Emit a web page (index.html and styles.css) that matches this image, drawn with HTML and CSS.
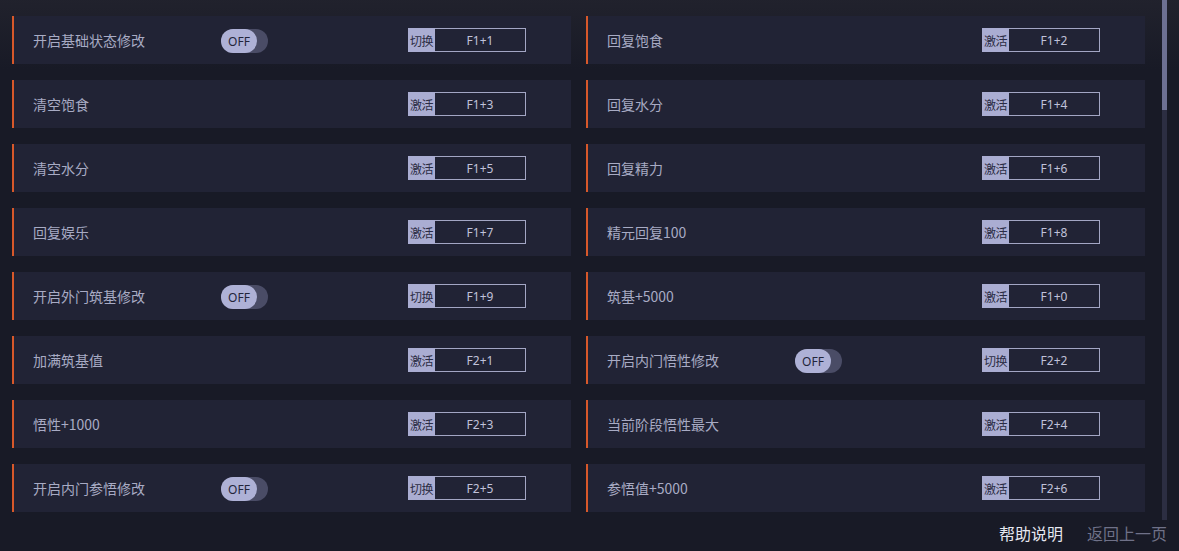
FILE: index.html
```html
<!DOCTYPE html>
<html lang="zh">
<head>
<meta charset="utf-8">
<link rel="stylesheet" href="styles.css">
</head>
<body>
<div class="page">
  <div class="grid">
    <div class="card"><span class="label">开启基础状态修改</span><span class="toggle"><span class="knob">OFF</span></span><span class="hk"><span class="tag">切换</span><span class="key">F1+1</span></span></div>
    <div class="card"><span class="label">回复饱食</span><span class="hk"><span class="tag">激活</span><span class="key">F1+2</span></span></div>
    <div class="card"><span class="label">清空饱食</span><span class="hk"><span class="tag">激活</span><span class="key">F1+3</span></span></div>
    <div class="card"><span class="label">回复水分</span><span class="hk"><span class="tag">激活</span><span class="key">F1+4</span></span></div>
    <div class="card"><span class="label">清空水分</span><span class="hk"><span class="tag">激活</span><span class="key">F1+5</span></span></div>
    <div class="card"><span class="label">回复精力</span><span class="hk"><span class="tag">激活</span><span class="key">F1+6</span></span></div>
    <div class="card"><span class="label">回复娱乐</span><span class="hk"><span class="tag">激活</span><span class="key">F1+7</span></span></div>
    <div class="card"><span class="label">精元回复100</span><span class="hk"><span class="tag">激活</span><span class="key">F1+8</span></span></div>
    <div class="card"><span class="label">开启外门筑基修改</span><span class="toggle"><span class="knob">OFF</span></span><span class="hk"><span class="tag">切换</span><span class="key">F1+9</span></span></div>
    <div class="card"><span class="label">筑基+5000</span><span class="hk"><span class="tag">激活</span><span class="key">F1+0</span></span></div>
    <div class="card"><span class="label">加满筑基值</span><span class="hk"><span class="tag">激活</span><span class="key">F2+1</span></span></div>
    <div class="card"><span class="label">开启内门悟性修改</span><span class="toggle"><span class="knob">OFF</span></span><span class="hk"><span class="tag">切换</span><span class="key">F2+2</span></span></div>
    <div class="card"><span class="label">悟性+1000</span><span class="hk"><span class="tag">激活</span><span class="key">F2+3</span></span></div>
    <div class="card"><span class="label">当前阶段悟性最大</span><span class="hk"><span class="tag">激活</span><span class="key">F2+4</span></span></div>
    <div class="card"><span class="label">开启内门参悟修改</span><span class="toggle"><span class="knob">OFF</span></span><span class="hk"><span class="tag">切换</span><span class="key">F2+5</span></span></div>
    <div class="card"><span class="label">参悟值+5000</span><span class="hk"><span class="tag">激活</span><span class="key">F2+6</span></span></div>
  </div>
  <div class="footer">
    <span class="help">帮助说明</span>
    <span class="back">返回上一页</span>
  </div>
  <div class="scrollbar"><div class="thumb"></div></div>
</div>
</body>
</html>
```
FILE: styles.css
```css
* { box-sizing: border-box; }
html, body {
  margin: 0;
  padding: 0;
  width: 1179px;
  height: 551px;
  overflow: hidden;
  background: #181a26;
  font-family: "Noto Sans CJK SC", "Noto Sans", sans-serif;
}
.page {
  position: relative;
  width: 1179px;
  height: 551px;
  background:
    linear-gradient(to bottom, rgba(40,40,50,0.55) 0px, rgba(24,26,38,0) 70px),
    #181a26;
}
.grid {
  display: grid;
  grid-template-columns: 559px 559px;
  grid-auto-rows: 48px;
  column-gap: 15px;
  row-gap: 16px;
  padding: 16px 0 0 12px;
}
.card {
  display: flex;
  align-items: center;
  background: #212335;
  border-left: 2px solid #d7582a;
  padding-left: 19px;
  padding-right: 45px;
}
.label {
  width: 188px;
  font-size: 14px;
  color: #a8abc4;
  white-space: nowrap;
  line-height: 20px;
}
.toggle {
  width: 47px;
  height: 24px;
  border-radius: 12px;
  background: #4a4c66;
  display: flex;
  margin-top: 2px;
}
.knob {
  width: 36px;
  height: 24px;
  border-radius: 12px;
  background: #aeb1d6;
  color: #23253a;
  font-family: "Noto Sans", sans-serif;
  font-size: 12px;
  display: flex;
  align-items: center;
  justify-content: center;
}
.hk {
  margin-left: auto;
  display: flex;
  width: 118px;
  height: 24px;
  border: 1px solid #a3a6c4;
}
.tag {
  width: 27px;
  background: #aaadd2;
  color: #2a2c44;
  font-size: 12px;
  display: flex;
  align-items: center;
  justify-content: center;
  letter-spacing: -0.5px;
  white-space: nowrap;
  margin: -1px 0 -1px -1px;
}
.key {
  flex: 1;
  display: flex;
  align-items: center;
  justify-content: center;
  color: #c0c2da;
  font-family: "Noto Sans", sans-serif;
  font-size: 12px;
}
.footer {
  display: flex;
  justify-content: flex-end;
  gap: 24px;
  padding: 10px 12px 0 0;
  font-size: 16px;
  line-height: 22px;
}
.help { color: #e6e7f0; }
.back { color: #6f7188; }
.scrollbar {
  position: absolute;
  top: 0;
  left: 1162px;
  width: 5px;
  height: 520px;
  background: #2c2e42;
}
.thumb {
  height: 110px;
  background: #6d7092;
}
```
